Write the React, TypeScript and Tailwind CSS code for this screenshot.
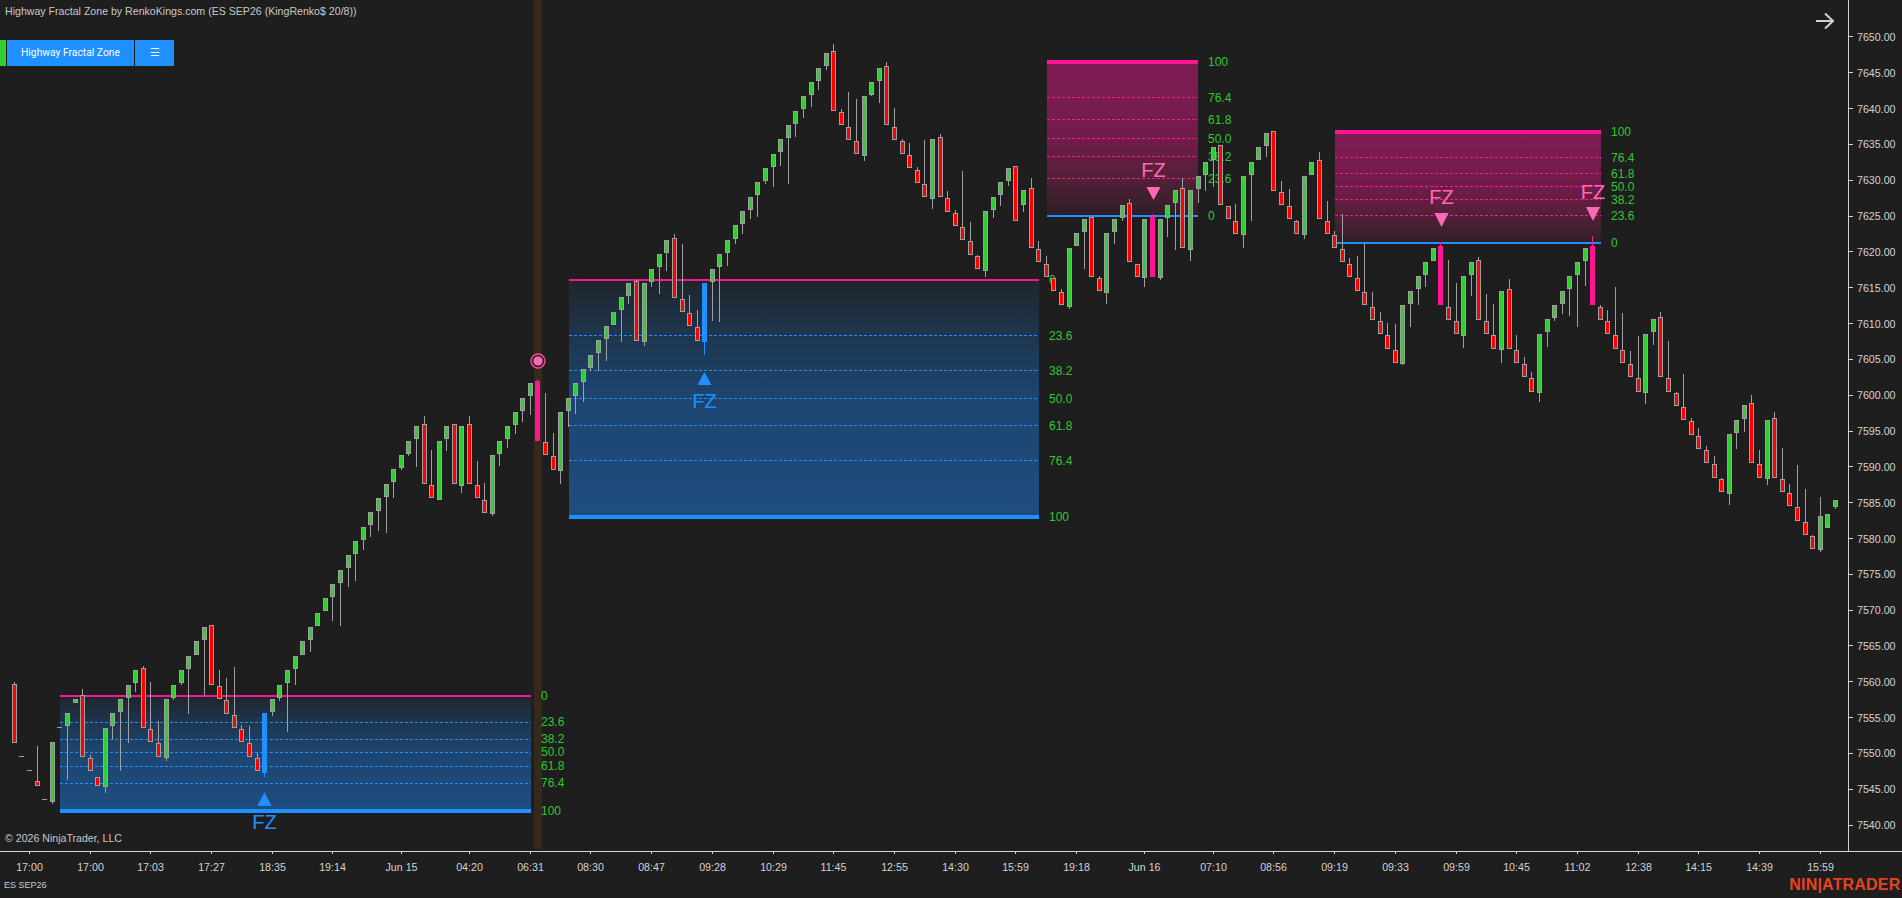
const PITCH = 7.588;
const X0 = 14.3;
const BASE_Y = 426.3;
const STEP = 14.345;

const GREEN = "#32cd32";
const RED = "#ff0000";
const BLUE = "#1e90ff";
const PINK = "#ff1493";
const HOT = "#ff69b4";
const WICK = "#a0a0a0";
const LABEL = "#30c830";

// one token per bar: direction + wick length in px
const seq =
  "d2 d0 d0 d35 d0 u2 d0 u54 u0 d6 d3 d0 u6 u14 u59 u45 u9 d2 d47 d22 u3 u2 u2 u45 u0 u55 d0 d16 d22 d48 d4 d17 d5 " +
  "u4 u4 u3 u49 u16 u0 u12 u0 u0 u24 u43 u19 u27 u10 u12 u20 u36 u16 u2 u2 u28 d8 d35 u0 u12 d0 u7 d8 d24 d17 u2 " +
  "u12 u9 u9 u11 u19 d2 d49 d23 u13 u16 u18 u20 u3 u18 u22 u0 u32 u8 d1 u4 u5 u27 u18 d4 d55 d18 d17 u13 u39 u55 " +
  "u13 u5 u10 u9 u22 u3 u20 u14 u46 u13 u9 u12 u9 u4 d7 d3 d35 d42 u5 u1 u22 d4 d19 d2 d12 d3 d44 u10 d3 d7 d3 d56 " +
  "d19 d1 u6 u8 u11 u5 d0 u7 d10 d8 d8 d0 d3 u2 u0 u37 d0 d2 u11 u12 u3 d4 d0 u9 d3 u2 u19 u47 d10 u11 u14 u16 u27 " +
  "d0 d0 d17 u13 u46 u0 u11 d0 d11 d17 d1 u4 u0 d8 d20 d4 d35 d6 d22 d49 d15 d9 d12 d26 u1 u23 u16 u12 u0 d4 d47 " +
  "d38 u12 u21 d3 d27 d31 u13 d10 d15 d7 d6 u9 u15 u3 u10 u27 u52 u25 d10 d2 d11 d48 d37 d13 d42 u11 u13 d5 d37 d1 " +
  "d33 d3 d8 d4 d8 d1 u11 u16 u13 d8 d14 u6 d6 d31 d9 d42 d33 d1 u2 u0 u2";

// bars that don't follow the brick rule: [top px, bottom px, close level]
const fixedBars: Record<number, [number, number, number]> = {
  0: [684, 743, -22],
  1: [756, 756, -22],
  2: [770, 770, -22],
  3: [781, 786, -22],
  4: [799, 799, -22],
  5: [742, 802, -22],
  6: [727, 727, -22],
  7: [713, 726, -22],
  8: [699, 703, -22],
  9: [695, 757, -23],
  11: [777, 786, -25],
  132: [166, 221, 14.45],
  133: [190, 205, 16.45],
  238: [516, 550, -6.3],
  239: [514, 528, -6.1],
  240: [500, 507, -5.2],
};

const signalColors: Record<number, string> = { 33: BLUE, 69: PINK, 91: BLUE, 150: PINK, 188: PINK, 208: PINK };

const levelY = (l: number) => BASE_Y - l * STEP;
const barX = (i: number) => Math.floor(X0 + i * PITCH) + 0.5;

function buildBars() {
  let close = 0;
  let lastUp = false;
  return seq.split(" ").map((tok, i) => {
    const up = tok[0] === "u";
    const wick = Number(tok.slice(1));
    const fixed = fixedBars[i];
    let top = 0;
    let bottom = 0;
    if (fixed) {
      top = fixed[0];
      bottom = fixed[1];
      close = fixed[2];
    } else {
      const size = up === lastUp ? 1 : 4;
      const hi = up ? close + size : close;
      const lo = up ? close : close - size;
      if (up) {
        top = levelY(hi);
        bottom = size === 1 ? levelY(lo) - 1.3 : levelY(lo) + 2;
      } else {
        top = size === 1 ? levelY(hi) + 1.5 : levelY(hi) - 2;
        bottom = levelY(lo) + 0.4;
      }
      close = up ? hi : lo;
    }
    lastUp = up;
    return { i, up, wick, top: Math.round(top), bottom: Math.round(bottom) };
  });
}

const zones = [
  {
    x1: 60, x2: 531, top: 695, topH: 2, bottom: 809, bottomH: 4, kind: "buy", labelX: 541,
    levels: [["0", 695], ["23.6", 721], ["38.2", 738], ["50.0", 751], ["61.8", 765], ["76.4", 782], ["100", 810]],
    dashes: [722, 739, 752, 766, 783],
  },
  {
    x1: 569, x2: 1039, top: 279, topH: 2, bottom: 515, bottomH: 4, kind: "buy", labelX: 1049,
    levels: [["0", 279], ["23.6", 335], ["38.2", 370], ["50.0", 398], ["61.8", 425], ["76.4", 460], ["100", 516]],
    dashes: [335, 370, 398, 425, 460],
  },
  {
    x1: 1047, x2: 1198, top: 60, topH: 4, bottom: 215, bottomH: 2, kind: "sell", labelX: 1208,
    levels: [["100", 61], ["76.4", 97], ["61.8", 119], ["50.0", 138], ["38.2", 156], ["23.6", 178], ["0", 215]],
    dashes: [97, 119, 138, 156, 178],
  },
  {
    x1: 1335, x2: 1601, top: 130, topH: 4, bottom: 242, bottomH: 2, kind: "sell", labelX: 1611,
    levels: [["100", 131], ["76.4", 157], ["61.8", 173], ["50.0", 186], ["38.2", 199], ["23.6", 215], ["0", 242]],
    dashes: [157, 173, 186, 199, 215],
  },
] as const;

const signals = [
  { cx: 264.5, up: true, tri: [792, 806], text: 829 },
  { cx: 704.5, up: true, tri: [372, 385], text: 408 },
  { cx: 1153.5, up: false, tri: [187, 200], text: 177 },
  { cx: 1441.5, up: false, tri: [213, 227], text: 204 },
  { cx: 1593, up: false, tri: [207, 221], text: 199 },
];

const timeTicks: [number, string][] = [
  [2, "17:00"], [10, "17:00"], [18, "17:03"], [26, "17:27"], [34, "18:35"], [42, "19:14"], [51, "Jun 15"],
  [60, "04:20"], [68, "06:31"], [76, "08:30"], [84, "08:47"], [92, "09:28"], [100, "10:29"], [108, "11:45"],
  [116, "12:55"], [124, "14:30"], [132, "15:59"], [140, "19:18"], [149, "Jun 16"], [158, "07:10"], [166, "08:56"],
  [174, "09:19"], [182, "09:33"], [190, "09:59"], [198, "10:45"], [206, "11:02"], [214, "12:38"], [222, "14:15"],
  [230, "14:39"], [238, "15:59"],
];

const prices = Array.from({ length: 23 }, (_, k) => (7650 - k * 5).toFixed(2));

function Chart() {
  const bars = buildBars();
  return (
    <svg width={1848} height={851} className="block">
      <defs>
        <linearGradient id="buy" x1="0" y1="0" x2="0" y2="1">
          <stop offset="0" stopColor="#1e252c" />
          <stop offset="0.25" stopColor="#1e3750" />
          <stop offset="0.5" stopColor="#1d4570" />
          <stop offset="1" stopColor="#1e4d80" />
        </linearGradient>
        <linearGradient id="sell" x1="0" y1="0" x2="0" y2="1">
          <stop offset="0" stopColor="#801c54" />
          <stop offset="0.5" stopColor="#721c4b" />
          <stop offset="0.75" stopColor="#552038" />
          <stop offset="1" stopColor="#2e1f27" />
        </linearGradient>
      </defs>

      <rect x={534} y={0} width={8} height={849} fill="#35291b" />

      {zones.map((z) => {
        const lineColor = z.kind === "buy" ? BLUE : PINK;
        return (
          <g key={z.x1}>
            <rect x={z.x1} y={z.top} width={z.x2 - z.x1} height={z.bottom - z.top} fill={`url(#${z.kind})`} />
            {z.dashes.map((y) => (
              <line key={y} x1={z.x1} x2={z.x2} y1={y + 0.5} y2={y + 0.5} stroke={lineColor} strokeDasharray="3 2" />
            ))}
            <rect x={z.x1} y={z.top} width={z.x2 - z.x1} height={z.topH} fill={PINK} />
            <rect x={z.x1} y={z.bottom} width={z.x2 - z.x1} height={z.bottomH} fill={BLUE} />
            {z.levels.map(([t, y]) => (
              <text key={t} x={z.labelX} y={y + 4.5} fontSize={12} fill={LABEL}>
                {t}
              </text>
            ))}
          </g>
        );
      })}

      {bars.map((b) => {
        const cx = barX(b.i);
        const signal = signalColors[b.i];
        if (b.top === b.bottom) {
          return <line key={b.i} x1={cx - 2.5} x2={cx + 2.5} y1={b.top + 0.5} y2={b.top + 0.5} stroke={WICK} />;
        }
        const y1 = b.up ? b.bottom : b.top - b.wick;
        const y2 = b.up ? b.bottom + b.wick : b.top;
        return (
          <g key={b.i}>
            {b.wick > 0 && <line x1={cx} x2={cx} y1={y1} y2={y2} stroke={signal ?? WICK} />}
            {signal ? (
              <rect x={cx - 2.5} y={b.top} width={5} height={b.bottom - b.top} fill={signal} />
            ) : (
              <rect
                x={cx - 2}
                y={b.top + 0.5}
                width={4}
                height={b.bottom - b.top - 1}
                fill={b.up ? GREEN : RED}
                stroke={WICK}
              />
            )}
          </g>
        );
      })}
      {/* last full bar has wicks on both ends */}
      <line x1={barX(238)} x2={barX(238)} y1={497} y2={516} stroke={WICK} />

      {signals.map((s) => {
        const color = s.up ? BLUE : HOT;
        const [a, b] = s.tri;
        const points = s.up
          ? `${s.cx},${a} ${s.cx + 7},${b} ${s.cx - 7},${b}`
          : `${s.cx - 7},${a} ${s.cx + 7},${a} ${s.cx},${b}`;
        return (
          <g key={s.cx}>
            <polygon points={points} fill={color} />
            <text x={s.cx} y={s.text} fontSize={20} textAnchor="middle" fill={color}>
              FZ
            </text>
          </g>
        );
      })}

      <circle cx={538} cy={361} r={7} fill="#3a1f2e" stroke="#ff4f8f" strokeWidth={1.3} />
      <circle cx={538} cy={361} r={4.6} fill={HOT} />

      <path d="M1816 21H1833M1825 13.5L1833 21L1825 28.5" fill="none" stroke="#d3d3d3" strokeWidth={2} />
    </svg>
  );
}

export default function App() {
  return (
    <div className="flex h-[898px] w-[1902px] flex-col overflow-hidden bg-[#1e1e1e] font-['Liberation_Sans',Arial,sans-serif] text-[#d3d3d3]">
      <div className="flex h-[852px] border-b border-[#d3d3d3]">
        <div className="relative w-[1849px] border-r border-[#d3d3d3]">
          <Chart />
          <div className="absolute left-[5px] top-[4px] text-[10.6px] leading-[14px] text-[#c8c8c8]">
            Highway Fractal Zone by RenkoKings.com (ES SEP26 (KingRenko$ 20/8))
          </div>
          <div className="absolute left-0 top-[40px] flex h-[26px] gap-px font-['Roboto',sans-serif] text-[10.3px] text-white">
            <div className="w-[6px] bg-[#32cd32]" />
            <div className="flex w-[127px] items-center justify-center bg-[#1e90ff]">Highway Fractal Zone</div>
            <div className="flex w-[39px] items-center justify-center bg-[#1e90ff] text-[11px]">☰</div>
          </div>
          <div className="absolute left-[5px] top-[831px] text-[10.6px] leading-[14px] text-[#c8c8c8]">
            © 2026 NinjaTrader, LLC
          </div>
        </div>
        <div className="flex flex-col pt-[19px] text-[10.67px]">
          {prices.map((p) => (
            <div key={p} className="flex h-[35.83px] items-center">
              <span className="h-px w-[4px] bg-[#d3d3d3]" />
              <span className="ml-[4px]">{p}</span>
            </div>
          ))}
        </div>
      </div>

      <div className="flex h-[21px] text-[10.67px]">
        {timeTicks.map(([i, t], n) => {
          const prev = n === 0 ? 0 : barX(timeTicks[n - 1][0]) + 20;
          return (
            <div
              key={i}
              className="flex w-[40px] flex-col items-center"
              style={{ marginLeft: barX(i) - prev - 20 }}
            >
              <span className="h-[5px] w-px bg-[#d3d3d3]" />
              <span className="mt-[7px] leading-[12px]">{t}</span>
            </div>
          );
        })}
      </div>

      <div className="flex items-center justify-between pl-[4px] pr-[1.5px]">
        <span className="text-[9px] leading-[24px] text-[#c8c8c8]">ES SEP26</span>
        <span className="text-[16px] font-bold leading-[24px] tracking-[0.2px] text-[#e8431f]">NIN|ATRADER</span>
      </div>
    </div>
  );
}
